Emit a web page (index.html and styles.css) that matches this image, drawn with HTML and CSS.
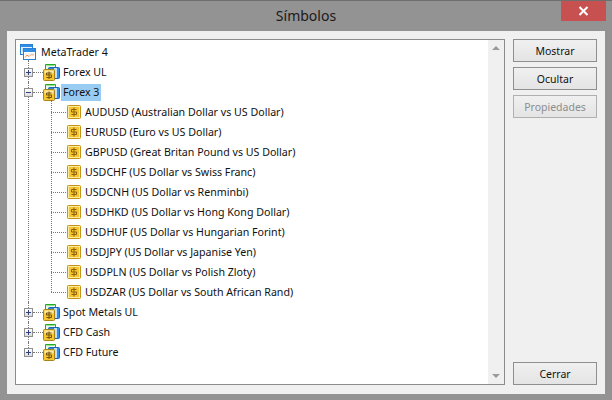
FILE: index.html
```html
<!DOCTYPE html>
<html lang="es">
<head>
<meta charset="utf-8">
<title>Símbolos</title>
<link rel="stylesheet" href="styles.css">
</head>
<body>
<svg class="defs" width="0" height="0" aria-hidden="true">
  <symbol id="coin" viewBox="0 0 14 14">
    <rect x="0.5" y="0.5" width="13" height="13" rx="1" fill="#f6c52f" stroke="#c2941c"/>
    <rect x="1.5" y="1.5" width="11" height="11" fill="none" stroke="#fdeb9e"/>
    <path d="M9.500 4.500H4.500V7H9.500V9.500H4.500" fill="none" stroke="#8a6410"/>
    <path d="M7 2.500V11.500" stroke="#8a6410"/>
  </symbol>
  <symbol id="folder" viewBox="0 0 17 17">
    <path d="M2.500 6V0.500H12.500V3" fill="#e8f8e8" stroke="#22a822"/>
    <path d="M3.500 1.500H11.500" stroke="#8fe08f"/>
    <rect x="5.500" y="3.500" width="11" height="11" rx="1" fill="#2b86d8" stroke="#1c64b0"/>
    <rect x="11" y="4" width="3" height="10" fill="#bfe0fa"/>
    <rect x="14" y="4" width="2" height="10" fill="#2f8fe6"/>
    <rect x="0.500" y="5.500" width="11" height="11" rx="1" fill="#f6c52f" stroke="#a8831c"/>
    <rect x="1.500" y="6.500" width="9" height="3" fill="#fdeaa2"/>
    <path d="M8.500 9H3.500V11H8.500V13.500H3.500M6 7.500V15" fill="none" stroke="#6f5210"/>
  </symbol>
  <symbol id="terminal" viewBox="0 0 16 16">
    <rect x="0.500" y="0.500" width="12" height="10" fill="#e4f1fc" stroke="#2a7fd6"/>
    <rect x="1" y="1" width="11" height="2" fill="#2f8de4"/>
    <path d="M2 5H3.500M2 7H3.500" stroke="#9cc7ee"/>
    <rect x="3.500" y="4.500" width="12" height="11" fill="#fff" stroke="#2a7fd6"/>
    <rect x="4" y="5" width="11" height="3" fill="#2f8de4"/>
    <path d="M5 13.500L7 11L9 12.500L11 10.500L14 11" fill="none" stroke="#f08a4b"/>
    <path d="M5 10H14" stroke="#e4e4e4"/>
  </symbol>
</svg>
<div class="window">
  <header class="titlebar">
    <h1 class="title">Símbolos</h1>
    <button class="close" type="button" aria-label="Cerrar">
      <svg width="11" height="10" viewBox="0 0 11 10"><path d="M1.500 1L9.500 9M9.500 1L1.500 9" fill="none" stroke="#fff" stroke-width="2"/></svg>
    </button>
  </header>
  <main class="dialog">
    <section class="tree">
      <div class="tree-view">
        <div class="row root">
          <svg class="icon-root"><use href="#terminal"/></svg>
          <span class="label">MetaTrader 4</span>
        </div>
        <ul class="branches">
          <li class="branch">
            <div class="row group"><span class="expander plus"></span><span class="link"></span><svg class="icon-folder"><use href="#folder"/></svg><span class="label">Forex UL</span></div>
          </li>
          <li class="branch">
            <div class="row group"><span class="expander"></span><span class="link"></span><svg class="icon-folder"><use href="#folder"/></svg><span class="label selected">Forex 3</span></div>
            <ul class="children">
              <li class="row child"><span class="link-child"></span><svg class="icon-coin"><use href="#coin"/></svg><span class="label">AUDUSD (Australian Dollar vs US Dollar)</span></li>
              <li class="row child"><span class="link-child"></span><svg class="icon-coin"><use href="#coin"/></svg><span class="label">EURUSD (Euro vs US Dollar)</span></li>
              <li class="row child"><span class="link-child"></span><svg class="icon-coin"><use href="#coin"/></svg><span class="label">GBPUSD (Great Britan Pound vs US Dollar)</span></li>
              <li class="row child"><span class="link-child"></span><svg class="icon-coin"><use href="#coin"/></svg><span class="label">USDCHF (US Dollar vs Swiss Franc)</span></li>
              <li class="row child"><span class="link-child"></span><svg class="icon-coin"><use href="#coin"/></svg><span class="label">USDCNH (US Dollar vs Renminbi)</span></li>
              <li class="row child"><span class="link-child"></span><svg class="icon-coin"><use href="#coin"/></svg><span class="label">USDHKD (US Dollar vs Hong Kong Dollar)</span></li>
              <li class="row child"><span class="link-child"></span><svg class="icon-coin"><use href="#coin"/></svg><span class="label">USDHUF (US Dollar vs Hungarian Forint)</span></li>
              <li class="row child"><span class="link-child"></span><svg class="icon-coin"><use href="#coin"/></svg><span class="label">USDJPY (US Dollar vs Japanise Yen)</span></li>
              <li class="row child"><span class="link-child"></span><svg class="icon-coin"><use href="#coin"/></svg><span class="label">USDPLN (US Dollar vs Polish Zloty)</span></li>
              <li class="row child"><span class="link-child"></span><svg class="icon-coin"><use href="#coin"/></svg><span class="label">USDZAR (US Dollar vs South African Rand)</span></li>
            </ul>
          </li>
          <li class="branch">
            <div class="row group"><span class="expander plus"></span><span class="link"></span><svg class="icon-folder"><use href="#folder"/></svg><span class="label">Spot Metals UL</span></div>
          </li>
          <li class="branch">
            <div class="row group"><span class="expander plus"></span><span class="link"></span><svg class="icon-folder"><use href="#folder"/></svg><span class="label">CFD Cash</span></div>
          </li>
          <li class="branch">
            <div class="row group"><span class="expander plus"></span><span class="link"></span><svg class="icon-folder"><use href="#folder"/></svg><span class="label">CFD Future</span></div>
          </li>
        </ul>
      </div>
      <div class="scrollbar">
        <span class="arrow up"></span>
        <span class="arrow down"></span>
      </div>
    </section>
    <aside class="actions">
      <button class="btn" type="button">Mostrar</button>
      <button class="btn" type="button">Ocultar</button>
      <button class="btn" type="button" disabled>Propiedades</button>
      <button class="btn last" type="button">Cerrar</button>
    </aside>
  </main>
</div>
</body>
</html>
```
FILE: styles.css
```css
* { box-sizing: border-box; }
html, body { margin: 0; padding: 0; }
body { width: 612px; height: 400px; overflow: hidden; background: #939393; }
.defs { display: block; height: 0; }
ul { list-style: none; margin: 0; padding: 0; }

.window {
  width: 612px;
  height: 400px;
  display: flex;
  flex-direction: column;
  background: #939393;
  border-top: 1px solid #6e6e6e;
  font-family: "Noto Sans", sans-serif;
}

.titlebar {
  height: 30px;
  flex: none;
  display: flex;
  justify-content: center;
  position: relative;
}
.title {
  margin: 0;
  font-family: "Noto Sans", sans-serif;
  font-weight: 400;
  font-size: 14px;
  line-height: 29px;
  color: #1a1a1a;
}
.close {
  position: absolute;
  right: 6px;
  top: 0;
  width: 45px;
  height: 20px;
  border: 0;
  padding: 0;
  background: #c75050;
  display: flex;
  align-items: center;
  justify-content: center;
}

.dialog {
  flex: none;
  height: 363px;
  margin: 0 7px;
  padding: 8px;
  display: flex;
  gap: 8px;
  background: #f0f0f0;
}

.tree {
  width: 490px;
  height: 346px;
  flex: none;
  display: flex;
  border: 1px solid #8c8c8c;
  background: #fff;
}
.tree-view {
  flex: 1;
  padding-top: 2px;
  font-family: "Noto Sans", sans-serif;
  font-size: 10.65px;
  color: #111;
}

.row { height: 20px; display: flex; align-items: center; }
.root { padding-left: 4px; }
.icon-root { width: 16px; height: 16px; flex: none; display: block; }
.icon-folder { width: 17px; height: 17px; flex: none; display: block; margin-right: -1px; }
.icon-coin { width: 14px; height: 14px; flex: none; display: block; margin-left: 1px; }
.label { padding: 0 3px; line-height: 17px; margin-left: 2px; white-space: nowrap; }
.group .label, .child .label { padding: 0 2px; }
.selected { background: #99ccf3; }

.branch { position: relative; }
.branch::before {
  content: "";
  position: absolute;
  left: 12px;
  top: 0;
  bottom: 0;
  border-left: 1px dotted #777;
}
.branch:first-child::before { top: -2px; }
.branch:last-child::before { bottom: auto; height: 10px; }

.group { padding-left: 8px; position: relative; }
.expander {
  width: 9px;
  height: 9px;
  flex: none;
  position: relative;
  border: 1px solid #8f8f8f;
  background: linear-gradient(#fff, #dcdcdc);
}
.expander::before {
  content: "";
  position: absolute;
  left: 1px;
  top: 3px;
  width: 5px;
  height: 1px;
  background: #2f3f7f;
}
.plus::after {
  content: "";
  position: absolute;
  left: 3px;
  top: 1px;
  width: 1px;
  height: 5px;
  background: #2f3f7f;
}
.link { width: 10px; flex: none; border-top: 1px dotted #777; }

.children { position: relative; }
.children::before {
  content: "";
  position: absolute;
  left: 35px;
  top: -2px;
  bottom: 10px;
  border-left: 1px dotted #777;
}
.child { padding-left: 35px; }
.link-child { width: 15px; flex: none; border-top: 1px dotted #777; }

.scrollbar {
  width: 16px;
  flex: none;
  background: #f0f0f0;
  display: flex;
  flex-direction: column;
  justify-content: space-between;
  align-items: center;
  padding: 6px 0;
}
.arrow { width: 0; height: 0; border-left: 4px solid transparent; border-right: 4px solid transparent; }
.up { border-bottom: 4px solid #9a9a9a; }
.down { border-top: 4px solid #9a9a9a; }

.actions {
  width: 84px;
  flex: none;
  height: 346px;
  display: flex;
  flex-direction: column;
  gap: 5px;
}
.btn {
  height: 23px;
  flex: none;
  padding: 0;
  border: 1px solid #8f8f8f;
  background: linear-gradient(#f0f0f0, #e4e4e4);
  font-family: "Noto Sans", sans-serif;
  font-size: 10.5px;
  color: #111;
}
.btn:disabled { color: #8e8e8e; border-color: #b0b0b0; }
.last { margin-top: auto; }
```
